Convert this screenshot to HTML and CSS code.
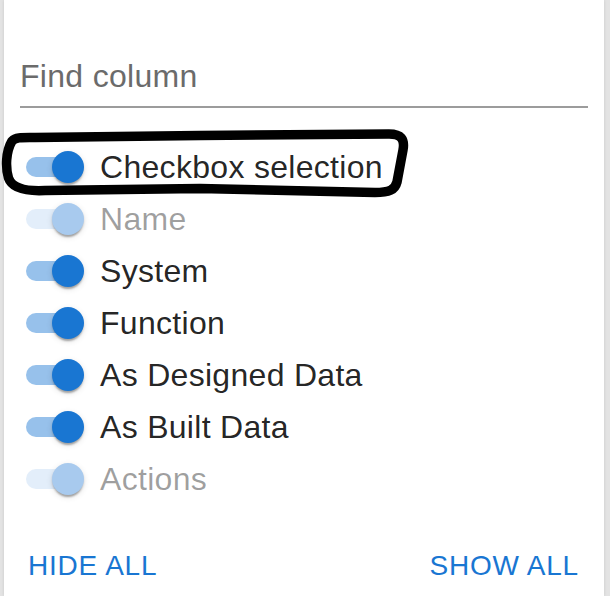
FILE: index.html
```html
<!DOCTYPE html>
<html>
<head>
<meta charset="utf-8">
<link rel="stylesheet" href="styles.css">
</head>
<body>
<div class="page">
  <div class="panel">
    <div class="search"><span class="placeholder">Find column</span></div>
    <ul class="list">
      <li class="item"><span class="switch"><span class="track"></span><span class="thumb"></span></span><span class="label">Checkbox selection</span></li>
      <li class="item disabled"><span class="switch"><span class="track"></span><span class="thumb"></span></span><span class="label">Name</span></li>
      <li class="item"><span class="switch"><span class="track"></span><span class="thumb"></span></span><span class="label">System</span></li>
      <li class="item"><span class="switch"><span class="track"></span><span class="thumb"></span></span><span class="label">Function</span></li>
      <li class="item"><span class="switch"><span class="track"></span><span class="thumb"></span></span><span class="label">As Designed Data</span></li>
      <li class="item"><span class="switch"><span class="track"></span><span class="thumb"></span></span><span class="label">As Built Data</span></li>
      <li class="item disabled"><span class="switch"><span class="track"></span><span class="thumb"></span></span><span class="label">Actions</span></li>
    </ul>
    <div class="footer">
      <button class="btn">HIDE ALL</button>
      <button class="btn">SHOW ALL</button>
    </div>
  </div>
  <svg class="annotation" width="610" height="596" viewBox="0 0 610 596">
    <path d="M 12 141 C 16 137, 22 137.5, 35 137.5 L 200 135.5 L 389 134 C 401 134, 405 139, 403 150 L 397 182 C 395 190, 389 192.5, 375 192.5 L 200 188.5 L 45 190.5 C 25 191.5, 12 188, 8.5 178 C 5.5 168, 5.5 152, 12 141 Z" fill="none" stroke="#000" stroke-width="9.5" stroke-linejoin="round" stroke-linecap="round"/>
  </svg>
</div>
</body>
</html>
```

FILE: styles.css
```css
html, body {
  margin: 0;
  padding: 0;
}
body {
  background: #e3e3e3;
  font-family: "Liberation Sans", Arial, Helvetica, sans-serif;
}
.page {
  position: relative;
  width: 610px;
  height: 596px;
  overflow: hidden;
}
.panel {
  margin: 0 6px 0 4px;
  height: 596px;
  background: #fff;
  box-shadow: 0 0 3px rgba(0, 0, 0, 0.12);
  box-sizing: border-box;
  padding-top: 56px;
}
.search {
  margin: 0 16px;
  padding-bottom: 10px;
  border-bottom: 2px solid #9c9c9c;
  font-size: 32px;
  line-height: 40px;
  letter-spacing: 0.3px;
  color: #6b6b6b;
}
.list {
  list-style: none;
  margin: 33px 0 0;
  padding: 0;
}
.item {
  display: flex;
  align-items: center;
  height: 52px;
  padding-left: 8px;
}
.switch {
  position: relative;
  flex: none;
  width: 80px;
  height: 48px;
  padding: 14px;
  box-sizing: border-box;
}
.track {
  display: block;
  width: 52px;
  height: 20px;
  border-radius: 10px;
  background: #1976d2;
  opacity: 0.45;
}
.thumb {
  position: absolute;
  top: 8px;
  left: 8px;
  width: 32px;
  height: 32px;
  border-radius: 50%;
  background: #1976d2;
  transform: translateX(32px);
  box-shadow: 0 4px 2px -2px rgba(0, 0, 0, 0.2), 0 2px 2px 0 rgba(0, 0, 0, 0.14), 0 2px 6px 0 rgba(0, 0, 0, 0.12);
}
.label {
  margin-left: 8px;
  font-size: 32px;
  line-height: 48px;
  letter-spacing: 0.3px;
  color: rgba(0, 0, 0, 0.87);
  white-space: nowrap;
}
.disabled .track {
  opacity: 0.12;
}
.disabled .thumb {
  background: #a8caee;
}
.disabled .label {
  color: rgba(0, 0, 0, 0.38);
}
.footer {
  display: flex;
  justify-content: space-between;
  margin-top: 28px;
  padding: 0 15px 0 14px;
}
.btn {
  font-family: "Liberation Sans", Arial, Helvetica, sans-serif;
  font-size: 28px;
  line-height: 49px;
  letter-spacing: 0.8px;
  color: #1976d2;
  background: none;
  border: 0;
  padding: 8px 10px;
  cursor: pointer;
}
.annotation {
  position: absolute;
  top: 0;
  left: 0;
}
```
